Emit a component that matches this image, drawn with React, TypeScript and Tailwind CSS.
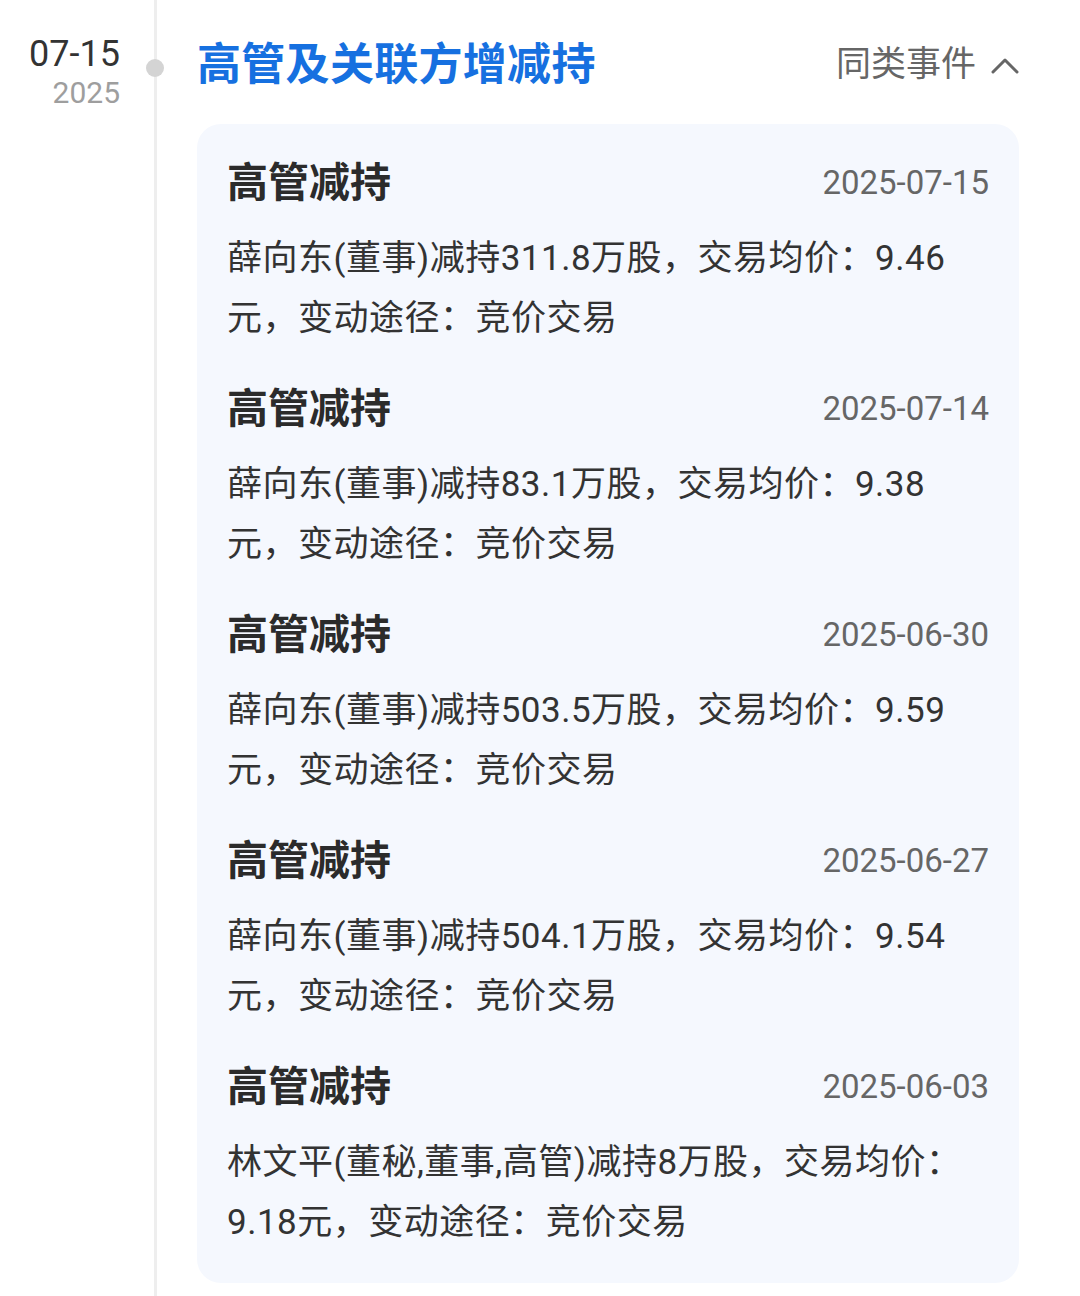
import React from "react";

const items = [
  { date: "2025-07-15", lines: ["薛向东(董事)减持311.8万股，交易均价：9.46", "元，变动途径：竞价交易"] },
  { date: "2025-07-14", lines: ["薛向东(董事)减持83.1万股，交易均价：9.38", "元，变动途径：竞价交易"] },
  { date: "2025-06-30", lines: ["薛向东(董事)减持503.5万股，交易均价：9.59", "元，变动途径：竞价交易"] },
  { date: "2025-06-27", lines: ["薛向东(董事)减持504.1万股，交易均价：9.54", "元，变动途径：竞价交易"] },
  { date: "2025-06-03", lines: ["林文平(董秘,董事,高管)减持8万股，交易均价：", "9.18元，变动途径：竞价交易"] },
];

export default function App() {
  return (
    <div className="w-[1080px] h-[1296px] bg-white flex overflow-hidden font-['Roboto','Noto_Sans_CJK_SC',sans-serif]">
      <div className="w-[120px] shrink-0 flex flex-col items-end pt-[33px]">
        <div className="text-[36px] leading-[42px] text-[#333333]">07-15</div>
        <div className="text-[30px] leading-[34px] mt-[1px] text-[#9e9e9e]">2025</div>
      </div>
      <div className="w-[70px] shrink-0 relative flex justify-center">
        <div className="w-[3px] h-full bg-[#eeeeee]" />
        <div className="absolute top-[59px] left-1/2 -translate-x-1/2 w-[18px] h-[18px] rounded-full bg-[#d4d4d4]" />
      </div>
      <div className="flex-1 ml-[7px] pr-[61px]">
        <div className="mt-[38px] h-[54px] flex items-center justify-between">
          <div className="text-[44px] leading-[54px] font-bold tracking-[0.3px] text-[#1670e0]">高管及关联方增减持</div>
          <div className="flex items-center">
            <span className="text-[35px] leading-[54px] text-[#666666]">同类事件</span>
            <svg className="ml-[15px]" width="28" height="18" viewBox="0 0 28 18" fill="none">
              <polyline points="2,16 14,4 26,16" stroke="#666666" strokeWidth="3" strokeLinecap="round" strokeLinejoin="round" />
            </svg>
          </div>
        </div>
        <div className="mt-[32px] rounded-[24px] bg-[#f5f8fe] px-[30px] pt-[33px] pb-[30px] flex flex-col gap-[34px]">
          {items.map((it, i) => (
            <div key={i} className="flex flex-col">
              <div className="h-[52px] flex items-center justify-between">
                <span className="text-[41px] leading-[52px] font-bold text-[#2b2b2b]">高管减持</span>
                <span className="text-[33px] leading-[52px] text-[#666666]">{it.date}</span>
              </div>
              <div className="mt-[20px] text-[35px] leading-[60px] tracking-[0.5px] text-[#333333] whitespace-nowrap">
                {it.lines.map((l, j) => (
                  <div key={j}>{l}</div>
                ))}
              </div>
            </div>
          ))}
        </div>
      </div>
    </div>
  );
}
